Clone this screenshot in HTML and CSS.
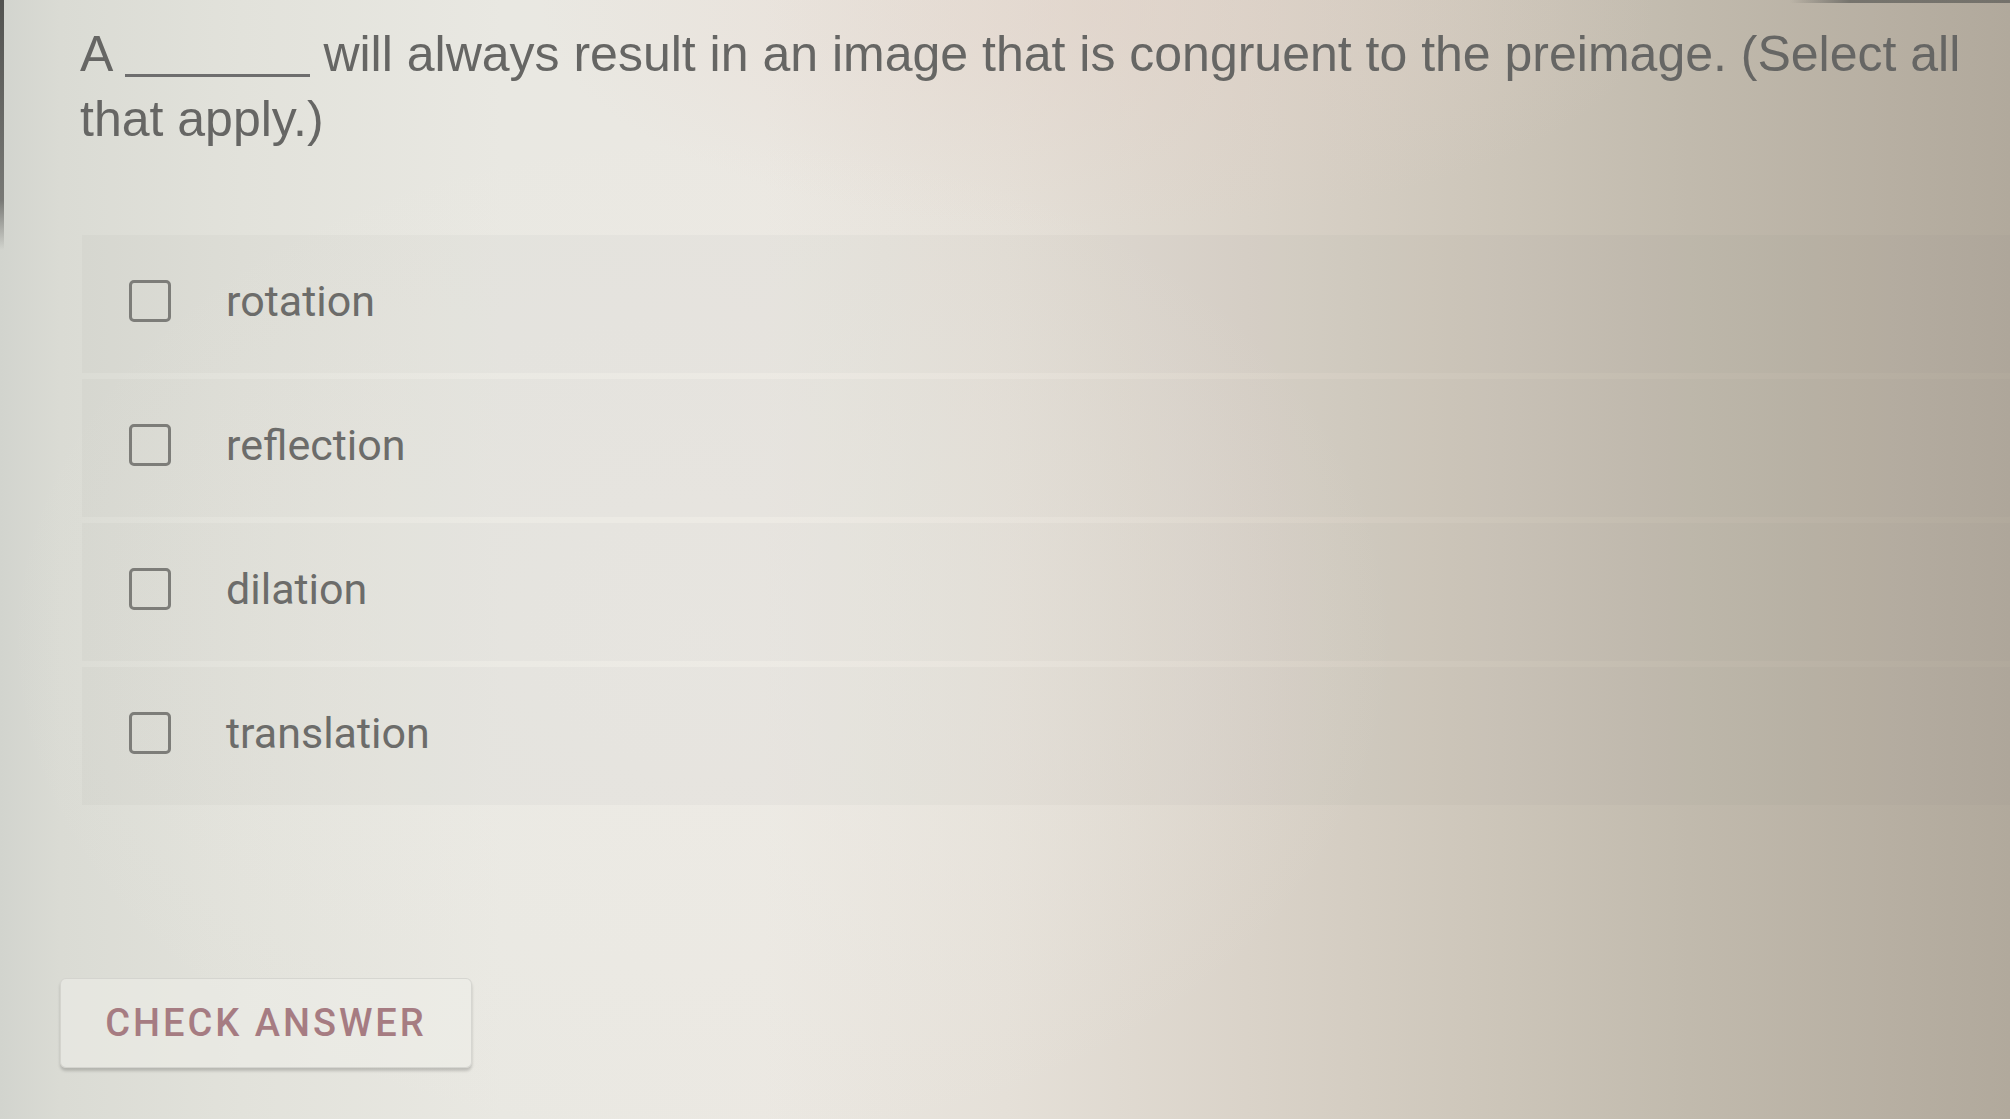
FILE: index.html
```html
<!DOCTYPE html>
<html lang="en">
<head>
<meta charset="utf-8">
<title>Question</title>
<link rel="stylesheet" href="styles.css">
</head>
<body>
<main class="page">
  <p class="question"><span>A</span> <span class="blank"></span> <span>will always result in an image that is congruent to the preimage. (Select all</span> <span>that apply.)</span></p>
  <ul class="options">
    <li class="option"><span class="box"></span><span class="label">rotation</span></li>
    <li class="option"><span class="box"></span><span class="label">reflection</span></li>
    <li class="option"><span class="box"></span><span class="label">dilation</span></li>
    <li class="option"><span class="box"></span><span class="label">translation</span></li>
  </ul>
  <div class="actions">
    <button class="check" type="button">CHECK ANSWER</button>
  </div>
</main>
</body>
</html>
```
FILE: styles.css
```css
html, body {
  margin: 0;
  padding: 0;
  height: 100%;
}
body {
  width: 2010px;
  height: 1119px;
  overflow: hidden;
  font-family: "Liberation Sans", Arial, sans-serif;
  background:
    linear-gradient(180deg, rgba(60,60,58,0.85) 0, rgba(60,60,58,0.6) 200px, rgba(60,60,58,0) 250px) 0 0 / 4px 100% no-repeat,
    linear-gradient(90deg, rgba(90,90,86,0) 0, rgba(90,90,86,0.7) 60px) 1790px 0 / 220px 3px no-repeat,
    radial-gradient(ellipse 560px 220px at 1100px 10px, rgba(226,208,198,0.45), rgba(226,208,198,0) 100%),
    radial-gradient(ellipse 700px 520px at 700px 640px, rgba(240,238,232,0.45), rgba(240,238,232,0) 100%),
    linear-gradient(90deg, #d2d4ce 0%, #dadbd4 3%, #e2e2db 12%, #e9e8e2 25%, #ebe8e2 38%, #e5e0d8 50%, #dad3c9 62%, #cec7bb 73%, #c1baad 84%, #b7afa2 94%, #b1a99c 100%);
}
.page {
  padding-top: 22px;
}
.question {
  margin: 0;
  padding: 0 20px 0 80px;
  font-size: 50px;
  line-height: 65px;
  color: #666664;
}
.blank {
  display: inline-block;
  width: 185px;
  height: 3px;
  background: #6e6e6e;
  vertical-align: -6px;
}
.options {
  list-style: none;
  margin: 83px 0 0 82px;
  padding: 0;
  display: flex;
  flex-direction: column;
  gap: 6px;
}
.option {
  height: 138px;
  display: flex;
  align-items: center;
  padding-left: 47px;
  background: rgba(120,115,105,0.045);
}
.box {
  width: 36px;
  height: 36px;
  border: 3px solid #7d7d79;
  border-radius: 5px;
  flex: none;
  margin-top: -6px;
}
.label {
  margin-left: 55px;
  font-family: Roboto, "Liberation Sans", sans-serif;
  font-size: 43px;
  color: #6c6c6a;
  margin-top: -6px;
}
.actions {
  padding: 173px 0 0 60px;
}
.check {
  width: 412px;
  height: 90px;
  border: 1px solid rgba(200,200,195,0.6);
  border-radius: 6px;
  background: rgba(238,238,233,0.55);
  box-shadow: 0 3px 3px rgba(0,0,0,0.18);
  font-family: Roboto, "Liberation Sans", sans-serif;
  font-weight: 500;
  font-size: 38px;
  letter-spacing: 3px;
  color: #a67c82;
  padding: 0;
  cursor: pointer;
}
```
